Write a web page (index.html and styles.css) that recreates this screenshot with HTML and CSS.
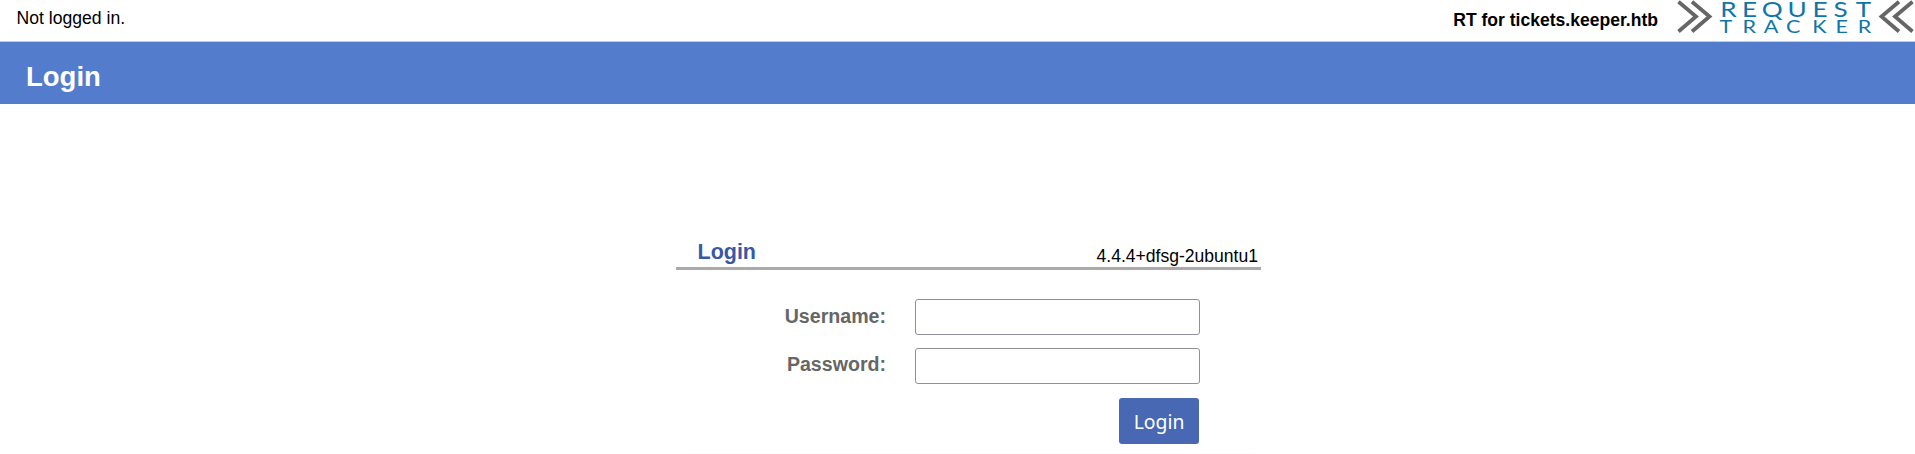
FILE: index.html
```html
<!DOCTYPE html>
<html lang="en">
<head>
<meta charset="utf-8">
<title>Login</title>
<link rel="stylesheet" href="styles.css">
</head>
<body>
<header class="topbar">
  <div class="status">Not logged in.</div>
  <div class="brand">
    <span class="site-name">RT for tickets.keeper.htb</span>
    <svg class="logo" width="238" height="36" viewBox="0 0 238 36" role="img" aria-label="Request Tracker">
      <g class="chevrons">
        <path d="M1.500 1.800 19 16.500 1.500 31.500M15 1.800 32.500 16.500 15 31.500"/>
        <path d="M222 1.800 204.500 16.500 222 31.500M235.500 1.800 218 16.500 235.500 31.500"/>
      </g>
      <g class="wordmark">
        <text class="word-top" transform="scale(1.2 1)" x="42.9 60.4 79.4 100.2 119.3 136.3 155.4" y="16.700">REQUEST</text>
        <text class="word-bottom" transform="scale(1.2 1)" x="40.8 60.2 78.3 96.9 118.600 137.300 156.200" y="33.500">TRACKER</text>
      </g>
    </svg>
  </div>
</header>
<div class="page-title"><h1>Login</h1></div>
<main class="login-panel">
  <div class="panel-head">
    <h2>Login</h2>
    <span class="version">4.4.4+dfsg-2ubuntu1</span>
  </div>
  <form class="login-form">
    <label class="row"><span class="label">Username:</span><input class="field" type="text"></label>
    <label class="row"><span class="label label-password">Password:</span><input class="field" type="password"></label>
    <button class="submit" type="button">Login</button>
  </form>
</main>
</body>
</html>
```

FILE: styles.css
```css
* { box-sizing: border-box; }
body {
  margin: 0;
  height: 454px;
  overflow: hidden;
  background: #fff;
  color: #000;
  font: 17.600px/20px "Liberation Sans", Arial, sans-serif;
}
.topbar {
  display: flex;
  justify-content: space-between;
  height: 42px;
  border-bottom: 1px solid #ccc;
}
.status { padding: 8px 0 0 16.500px; }
.brand { display: flex; gap: 19px; }
.site-name { padding-top: 10px; font-weight: bold; font-size: 17.560px; }
.logo { display: block; }
.chevrons { fill: none; stroke: #666; stroke-width: 3.800; }
.wordmark { fill: #0f75a8; font-family: Lato, sans-serif; text-anchor: middle; }
.word-top { font-size: 21.800px; }
.word-bottom { font-size: 18px; }
.page-title {
  height: 62px;
  padding: 19px 0 0 26px;
  background: #547ccc;
  color: #fff;
}
h1 { margin: 0; font-size: 27.500px; line-height: 32px; }
.login-panel {
  width: 585px;
  height: 224px;
  margin: 126px 0 0 676px;
  border-bottom: 1px solid #fcfcfc;
  border-radius: 0 0 8px 8px;
}
.panel-head {
  display: flex;
  justify-content: space-between;
  height: 40px;
  padding: 0 3px 0 21px;
  border-bottom: 3px solid #aaa;
}
h2 { margin: 0; padding: 9px 0 0 0.500px; color: #3858a6; font-size: 21.500px; line-height: 26px; }
.version { padding-top: 16px; font-size: 17.560px; }
.login-form {
  display: flex;
  flex-direction: column;
  padding: 29px 61px 0 0;
}
.row { display: flex; justify-content: flex-end; gap: 29px; height: 36px; margin-bottom: 13px; }
.label { padding-top: 5px; color: #666; font-size: 19.600px; font-weight: bold; line-height: 24px; }
.label-password { padding-top: 4px; }
.field {
  width: 285px;
  height: 36px;
  border: 1px solid #8f8f9d;
  border-radius: 3px;
  background: #fff;
}
.submit {
  align-self: flex-end;
  width: 80px;
  height: 46px;
  margin: 1px 1px 0 0;
  padding: 0;
  border: 0;
  border-radius: 3px;
  background: #4868b3;
  color: #fff;
  font: 19.360px "Noto Sans", sans-serif;
}
```
